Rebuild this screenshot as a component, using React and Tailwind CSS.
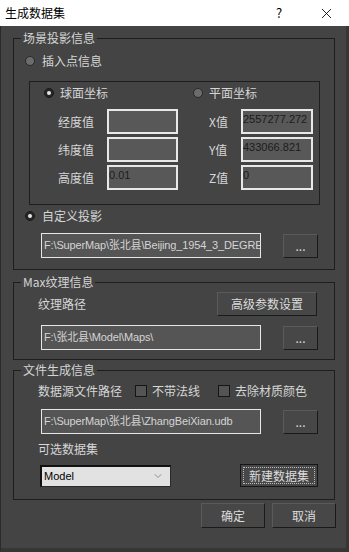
import { X, ChevronDown } from 'lucide-react'

const cjk = { fontFamily: '"Noto Sans CJK SC", "Noto Sans", sans-serif' }

function Radio({ checked }) {
    return checked ? (
        <span className="w-[10px] h-[10px] rounded-full bg-[#262626] border border-[#1a1a1a] flex items-center justify-center shrink-0">
            <span className="w-[4px] h-[4px] rounded-full bg-[#e4e4e4]" />
        </span>
    ) : (
        <span className="w-[10px] h-[10px] rounded-full bg-[#6c6c6c] border border-[#2a2a2a] shrink-0" />
    )
}

function Check({ className = '' }) {
    return <div className={`w-[12px] h-[12px] bg-[#545454] border border-[#161616] shrink-0 ${className}`} />
}

function Btn({ children, className = '' }) {
    return (
        <div className={`flex items-center justify-center bg-[#474747] border border-t-[#5a5a5a] border-l-[#5a5a5a] border-b-[#1a1a1a] border-r-[#1a1a1a] text-[12px] leading-[14px] text-[#dcdcdc] ${className}`}>
            {children}
        </div>
    )
}

function CoordInput({ value }) {
    return (
        <div className="h-[25px] bg-[#585858] border-2 border-[#e8e8e8] text-[11px] leading-[16px] text-[#1c1c1c] font-['Liberation_Sans']">
            {value}
        </div>
    )
}

function PathRow({ path, className = '' }) {
    return (
        <div className={`flex items-center ${className}`}>
            <div className="ml-[27px] w-[220px] h-[25px] bg-[#555555] border border-[#e6e6e6] pl-[2px] flex items-center overflow-hidden whitespace-nowrap text-[11px] text-[#d4d4d4]">
                <span className="tracking-[-0.15px]" style={{ fontFamily: '"Liberation Sans", "Noto Sans CJK SC", sans-serif' }}>{path}</span>
            </div>
            <Btn className="ml-[22px] w-[35px] h-[24px] text-[10px]">...</Btn>
        </div>
    )
}

function Group({ title, className = '', children }) {
    return (
        <fieldset className={`ml-[12px] w-[322px] border border-[#1e1e1e] p-0 ${className}`}>
            <legend className="ml-[7px] px-[2px] text-[12px] leading-[14px] text-[#d4d4d4]">{title}</legend>
            {children}
        </fieldset>
    )
}

export default function App() {
    return (
        <div className="w-[349px] h-[552px] bg-[#444444] flex flex-col" style={cjk}>
            <div className="h-[26px] bg-white flex items-center shrink-0">
                <span className="pl-[5px] text-[12px] text-black flex-1">生成数据集</span>
                <span className="w-[20px] text-center text-[13px] text-black">?</span>
                <span className="ml-[22px] w-[30px] flex justify-center text-black">
                    <X size={17} strokeWidth={1.2} />
                </span>
                <span className="w-[8px]" />
            </div>

            <div className="flex-1 border-l border-l-[#2a2a2a] border-r-[3px] border-r-[#363636] border-b-[4px] border-b-[#363636] flex flex-col">
                <Group title="场景投影信息" className="mt-[5px]">
                    <div className="pb-[11px]">
                        <div className="mt-[9px] pl-[11px] h-[14px] flex items-center gap-[7px] text-[12px] text-[#d6d6d6]">
                            <Radio />
                            <span>插入点信息</span>
                        </div>

                        <div className="mt-[13px] ml-[15px] w-[291px] border border-[#1e1e1e] pt-[4px] pb-[14px]">
                            <div className="pl-[14px] h-[14px] flex items-center text-[12px] text-[#d6d6d6]">
                                <div className="w-[149px] flex items-center gap-[6px]">
                                    <Radio checked />
                                    <span>球面坐标</span>
                                </div>
                                <div className="flex items-center gap-[6px]">
                                    <Radio />
                                    <span>平面坐标</span>
                                </div>
                            </div>
                            <div className="mt-[9px] pl-[28px] flex flex-col gap-[3px] text-[12px] text-[#d6d6d6]">
                                {[
                                    ['经度值', '', 'X值', '2557277.272'],
                                    ['纬度值', '', 'Y值', '433066.821'],
                                    ['高度值', '0.01', 'Z值', '0'],
                                ].map(([l1, v1, l2, v2]) => (
                                    <div key={l1} className="flex items-center">
                                        <span className="w-[49px]">{l1}</span>
                                        <div className="w-[71px]"><CoordInput value={v1} /></div>
                                        <span className="ml-[31px] w-[32px]">{l2}</span>
                                        <div className="w-[72px]"><CoordInput value={v2} /></div>
                                    </div>
                                ))}
                            </div>
                        </div>

                        <div className="mt-[4px] pl-[11px] h-[14px] flex items-center gap-[7px] text-[12px] text-[#d6d6d6]">
                            <Radio checked />
                            <span>自定义投影</span>
                        </div>
                        <PathRow className="mt-[10px]" path={'F:\\SuperMap\\张北县\\Beijing_1954_3_DEGRE'} />
                    </div>
                </Group>

                <Group title="Max纹理信息" className="mt-[5px]">
                    <div className="pb-[9px]">
                        <div className="mt-[3px] pl-[24px] pr-[17px] flex items-center text-[12px] text-[#d6d6d6]">
                            <span>纹理路径</span>
                            <Btn className="ml-auto w-[100px] h-[24px]">高级参数设置</Btn>
                        </div>
                        <PathRow className="mt-[9px]" path={'F:\\张北县\\Model\\Maps\\'} />
                    </div>
                </Group>

                <Group title="文件生成信息" className="mt-[3px]">
                    <div className="pb-[12px]">
                        <div className="mt-[7px] pl-[24px] h-[14px] flex items-center text-[12px] text-[#d6d6d6]">
                            <span>数据源文件路径</span>
                            <Check className="ml-[13px]" />
                            <span className="ml-[5px]">不带法线</span>
                            <Check className="ml-[18px]" />
                            <span className="ml-[5px]">去除材质颜色</span>
                        </div>
                        <PathRow className="mt-[11px]" path={'F:\\SuperMap\\张北县\\ZhangBeiXian.udb'} />
                        <div className="mt-[8px] pl-[24px] h-[14px] flex items-center text-[12px] text-[#d6d6d6]">
                            可选数据集
                        </div>
                        <div className="mt-[8px] pr-[16px] flex items-center">
                            <div className="ml-[26px] w-[131px] h-[22px] bg-[#e2e2e2] border-t-2 border-l-2 border-[#111111] border-b border-r border-b-[#2a2a2a] border-r-[#2a2a2a] flex items-center pl-[2px] pr-[6px] text-[11px] text-black font-['Liberation_Sans']">
                                <span className="flex-1">Model</span>
                                <ChevronDown size={12} strokeWidth={1.5} color="#777777" />
                            </div>
                            <div className="ml-auto w-[78px] h-[23px] bg-[#474747] border border-[#161616] p-[2px]">
                                <div className="w-full h-full border border-dotted border-[#bdbdbd] flex items-center justify-center text-[12px] text-[#dcdcdc]">
                                    新建数据集
                                </div>
                            </div>
                        </div>
                    </div>
                </Group>

                <div className="mt-[3px] pr-[10px] flex justify-end gap-[7px]">
                    <Btn className="w-[64px] h-[25px]">确定</Btn>
                    <Btn className="w-[64px] h-[25px]">取消</Btn>
                </div>
            </div>
        </div>
    )
}
